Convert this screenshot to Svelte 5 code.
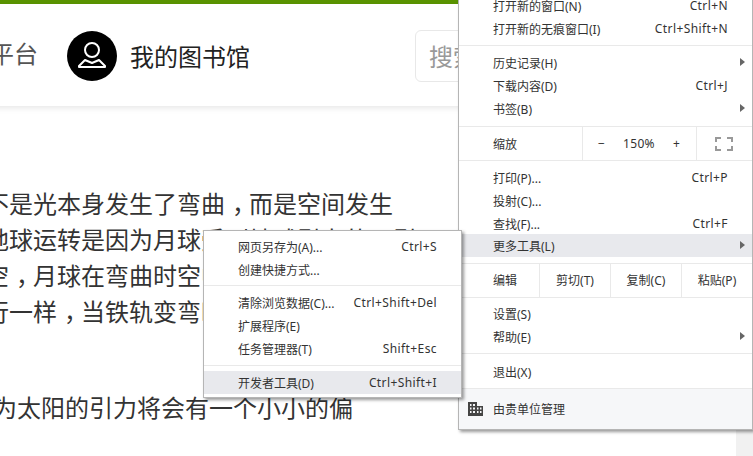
<script lang="ts">
	interface Item {
		label: string;
		keys?: string;
		more?: boolean;
		active?: boolean;
	}

	const paragraphs = [
		{
			cls: 'para',
			lines: [
				'不是光本身发生了弯曲，而是空间发生',
				'地球运转是因为月球受到地球引力的吸引',
				'空，月球在弯曲时空中沿直线运动',
				'行一样，当铁轨变弯时火车也随之转弯'
			]
		},
		{ cls: 'para shifted', lines: ['为太阳的引力将会有一个小小的偏'] }
	];

	const sections: { cls: string; items: Item[] }[] = [
		{
			cls: 'first',
			items: [
				{ label: '打开新的窗口(N)', keys: 'Ctrl+N' },
				{ label: '打开新的无痕窗口(I)', keys: 'Ctrl+Shift+N' }
			]
		},
		{
			cls: 'history',
			items: [
				{ label: '历史记录(H)', more: true },
				{ label: '下载内容(D)', keys: 'Ctrl+J' },
				{ label: '书签(B)', more: true }
			]
		}
	];

	const printItems: Item[] = [
		{ label: '打印(P)...', keys: 'Ctrl+P' },
		{ label: '投射(C)...' },
		{ label: '查找(F)...', keys: 'Ctrl+F' },
		{ label: '更多工具(L)', more: true, active: true }
	];

	const settingItems: Item[] = [
		{ label: '设置(S)' },
		{ label: '帮助(E)', more: true }
	];

	const subSections: { cls: string; items: Item[] }[] = [
		{
			cls: 'sub-a',
			items: [
				{ label: '网页另存为(A)...', keys: 'Ctrl+S' },
				{ label: '创建快捷方式...' }
			]
		},
		{
			cls: 'sub-b',
			items: [
				{ label: '清除浏览数据(C)...', keys: 'Ctrl+Shift+Del' },
				{ label: '扩展程序(E)' },
				{ label: '任务管理器(T)', keys: 'Shift+Esc' }
			]
		},
		{
			cls: 'sub-c',
			items: [{ label: '开发者工具(D)', keys: 'Ctrl+Shift+I', active: true }]
		}
	];
</script>

{#snippet row(item: Item)}
	<div class="row" class:active={item.active}>
		<span>{item.label}</span>
		{#if item.keys}<span class="keys">{item.keys}</span>{/if}
		{#if item.more}<span class="arrow"></span>{/if}
	</div>
{/snippet}

<div class="screen">
	<div class="page">
		<div class="topline"></div>
		<header>
			<span class="brand">平台</span>
			<svg class="avatar" width="50" height="50" viewBox="0 0 50 50">
				<circle cx="25" cy="25" r="25" fill="#000" />
				<circle cx="25" cy="19" r="7" fill="none" stroke="#fff" stroke-width="2" />
				<path
					d="M18 29 L25 32 L32 29 L38 35 L38 36 H12 L12 35 Z"
					fill="none"
					stroke="#fff"
					stroke-width="2"
					stroke-linejoin="round"
				/>
			</svg>
			<span class="library">我的图书馆</span>
			<div class="search">搜索</div>
		</header>
		<main>
			{#each paragraphs as p}
				<div class={p.cls}>
					{#each p.lines as line}
						<div>
							{#each line.split('，') as part, i}
								{#if i > 0}<span class="comma">，</span>{/if}{part}
							{/each}
						</div>
					{/each}
				</div>
			{/each}
		</main>
	</div>
	<div class="scrollbar"></div>

	<nav class="menu">
		{#each sections as section}
			<div class="section {section.cls}">
				{#each section.items as item}
					{@render row(item)}
				{/each}
			</div>
		{/each}

		<div class="split zoom">
			<span class="split-label">缩放</span>
			<div class="zoom-controls">
				<span>−</span>
				<span class="percent">150%</span>
				<span>+</span>
			</div>
			<div class="fullscreen">
				<svg width="18" height="14" viewBox="0 0 18 14">
					<path
						d="M0 5V0H6V2H2V5ZM12 0H18V5H16V2H12ZM0 9H2V12H6V14H0ZM16 9H18V14H12V12H16Z"
						fill="#999"
					/>
				</svg>
			</div>
		</div>

		<div class="section print">
			{#each printItems as item}
				{@render row(item)}
			{/each}
		</div>

		<div class="split edit">
			<span class="split-label">编辑</span>
			<span class="cell">剪切(T)</span>
			<span class="cell">复制(C)</span>
			<span class="cell">粘贴(P)</span>
		</div>

		<div class="section settings">
			{#each settingItems as item}
				{@render row(item)}
			{/each}
		</div>

		<div class="section quit">
			{@render row({ label: '退出(X)' })}
		</div>

		<div class="managed">
			<svg width="15" height="14" viewBox="0 0 15 14">
				<path
					d="M0 0H9V4H15V14H0ZM2 2V4H3.5V2ZM5 2V4H7V2ZM2 5.5V7.5H3.5V5.5ZM5 5.5V7.5H7V5.5ZM2 9V11H3.5V9ZM5 9V11H7V9ZM9 5.5V7.5H10.5V5.5ZM12 5.5V7.5H13.5V5.5ZM9 9V11H10.5V9ZM12 9V11H13.5V9Z"
					fill="#444"
					fill-rule="evenodd"
				/>
			</svg>
			<span>由贵单位管理</span>
		</div>
	</nav>

	<nav class="submenu">
		{#each subSections as section}
			<div class="section {section.cls}">
				{#each section.items as item}
					{@render row(item)}
				{/each}
			</div>
		{/each}
	</nav>
</div>

<style>
	:global(body) {
		margin: 0;
		background: #fff;
	}

	.screen {
		position: relative;
		display: flex;
		width: 753px;
		height: 456px;
		overflow: hidden;
		font-family: 'Noto Sans', 'Noto Sans CJK SC', sans-serif;
	}

	.page {
		flex: 1;
		min-width: 0;
	}

	.scrollbar {
		width: 17px;
		background: #f1f1f1;
	}

	.topline {
		height: 4px;
		background: #5a9400;
	}

	header {
		display: flex;
		align-items: center;
		height: 102px;
		margin-left: -10px;
		box-shadow: 0 2px 6px rgba(0, 0, 0, 0.1);
		font-family: 'Noto Sans CJK SC', sans-serif;
		white-space: nowrap;
	}

	.brand {
		width: 48px;
		margin-right: 29px;
		margin-bottom: 5px;
		font-size: 24px;
		color: #555;
	}

	.avatar {
		flex: none;
		margin-top: 2px;
	}

	.library {
		margin-left: 13px;
		font-size: 24px;
		color: #222;
	}

	.search {
		width: 300px;
		height: 50px;
		margin-left: 165px;
		margin-top: 2px;
		padding-left: 13px;
		border: 1px solid #e8e8e8;
		border-radius: 6px;
		font-size: 24px;
		line-height: 50px;
		color: #999;
	}

	main {
		padding-top: 79px;
		margin-left: -15px;
		font-family: 'Noto Sans CJK SC', sans-serif;
		font-size: 24px;
		line-height: 36px;
		color: #333;
		white-space: nowrap;
	}

	.para {
		margin-bottom: 60px;
	}

	.shifted {
		padding-left: 8px;
	}

	/* the reference's comma sits in the middle of its cell */
	.comma {
		display: inline-block;
		width: 24px;
		transform: translateX(7px);
	}

	.menu,
	.submenu {
		position: absolute;
		box-sizing: border-box;
		background: #fff;
		border: 1px solid #b5b5b5;
		box-shadow: 2px 2px 3px rgba(0, 0, 0, 0.4);
		font-size: 12px;
		color: #333;
		white-space: nowrap;
	}

	.menu {
		left: 458px;
		top: -7px;
		width: 295px;
		height: 437px;
		--pad-left: 34px;
		--pad-right: 24px;
	}

	.submenu {
		left: 203px;
		top: 230px;
		width: 259px;
		height: 168px;
		--pad-left: 34px;
		--pad-right: 24px;
	}

	.row {
		position: relative;
		display: flex;
		align-items: center;
		justify-content: space-between;
		height: 23px;
		padding: 0 var(--pad-right) 0 var(--pad-left);
	}

	.row.active {
		background: #e8e9ed;
	}

	.keys {
		letter-spacing: 0.4px;
	}

	.arrow {
		position: absolute;
		right: 7px;
		top: 7px;
		border-left: 5px solid #666;
		border-top: 4px solid transparent;
		border-bottom: 4px solid transparent;
	}

	.section {
		padding: 5px 0;
	}

	.section + .section,
	.split + .section,
	.section + .split,
	.section + .managed {
		border-top: 1px solid #e9e9e9;
	}

	.first {
		padding-top: 0;
	}

	.history {
		padding-bottom: 6px;
	}

	.print {
		padding-bottom: 6px;
	}

	.print .row.active {
		margin-top: -1px;
	}

	.settings {
		padding-top: 4px;
	}

	.quit {
		padding-top: 6px;
	}

	.sub-a {
		padding-top: 4px;
		padding-bottom: 4px;
	}

	.sub-c {
		padding-bottom: 0;
	}

	.split {
		display: flex;
		align-items: stretch;
		height: 33px;
		line-height: 33px;
	}

	.split-label {
		padding-left: 34px;
	}

	.zoom .split-label {
		width: 89px;
		line-height: 35px;
		border-right: 1px solid #e9e9e9;
	}

	.zoom-controls {
		display: flex;
		justify-content: space-between;
		width: 82px;
		padding: 0 16px 0 15px;
		border-right: 1px solid #e9e9e9;
	}

	.percent {
		letter-spacing: 0.3px;
	}

	.fullscreen {
		display: flex;
		align-items: center;
		padding-left: 18px;
	}

	.edit .split-label {
		width: 46px;
	}

	.cell {
		width: 70px;
		border-left: 1px solid #e9e9e9;
		text-align: center;
	}

	.managed {
		display: flex;
		align-items: center;
		gap: 10px;
		height: 40px;
		padding-left: 9px;
		background: #f6f7f9;
	}
</style>
